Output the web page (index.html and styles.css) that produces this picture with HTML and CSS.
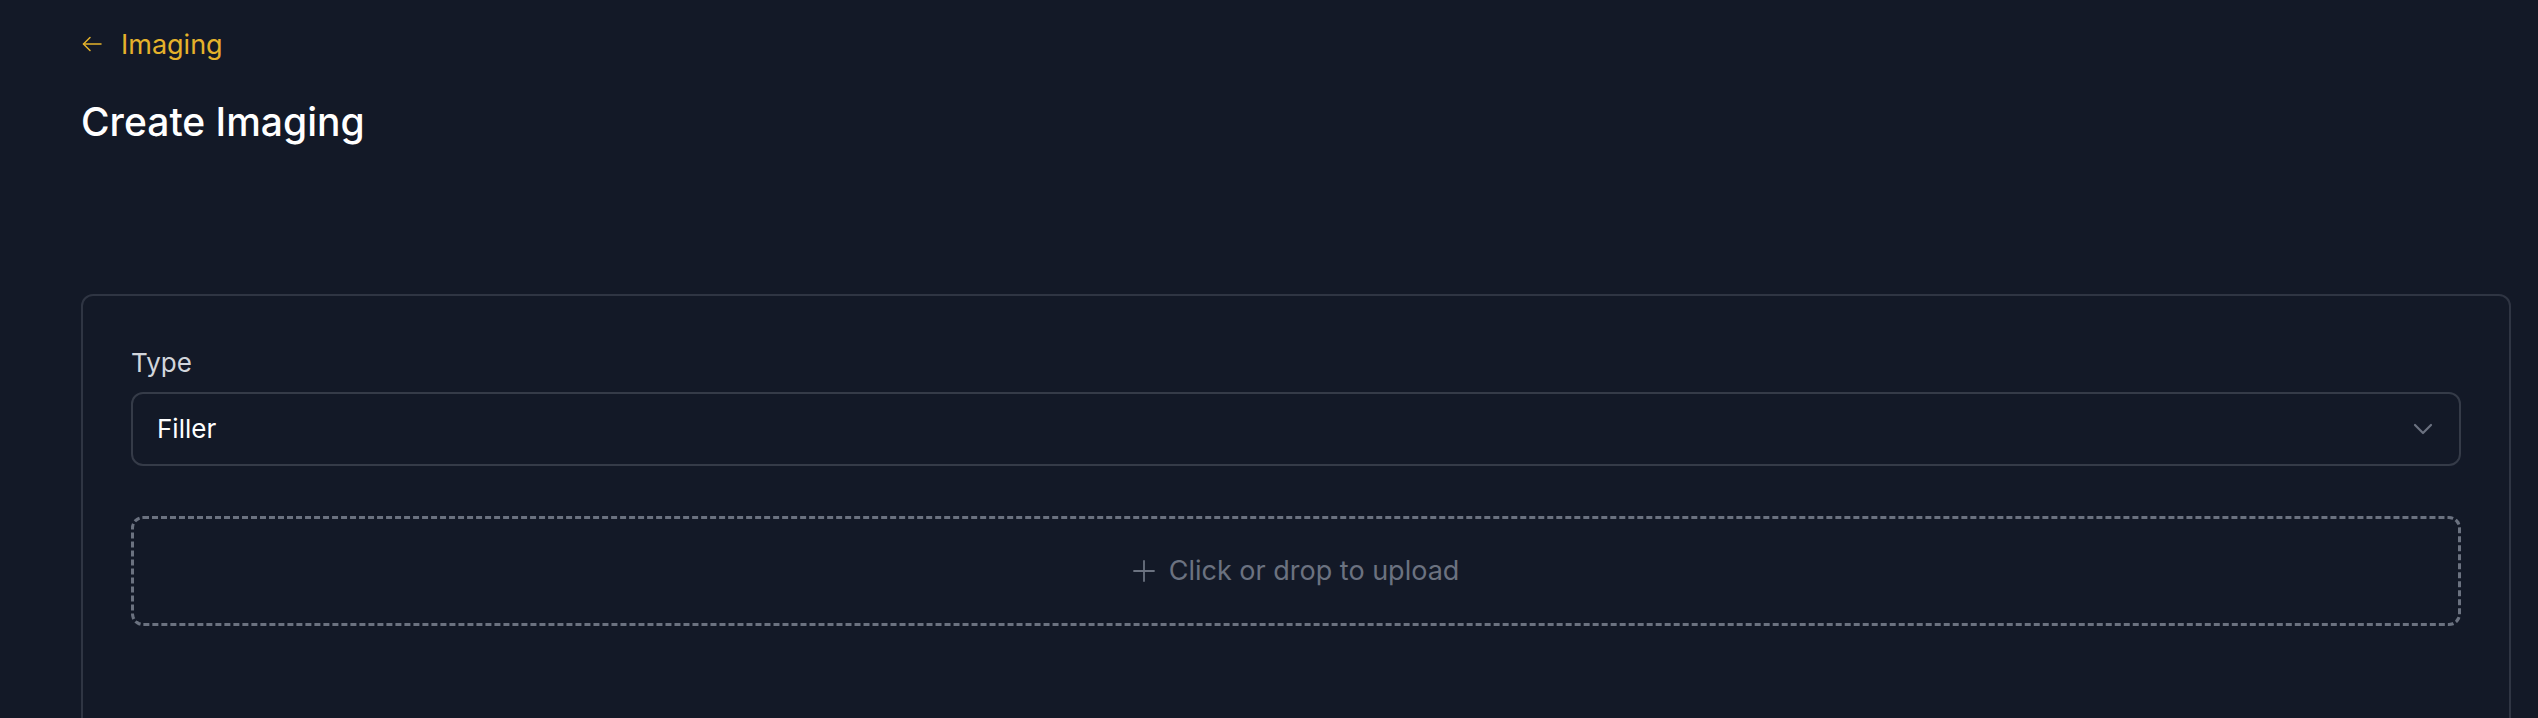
FILE: index.html
```html
<!DOCTYPE html>
<html lang="en">
<head>
  <meta charset="UTF-8">
  <meta name="viewport" content="width=device-width, initial-scale=1">
  <title>Create Imaging</title>
  <link rel="stylesheet" href="styles.css">
</head>
<body>

  <a class="back-link" href="#">
    <svg class="back-icon" viewBox="0 0 20 16" fill="none" stroke="currentColor" stroke-width="1.5" stroke-linecap="round" stroke-linejoin="round">
      <path d="M19 8H1.5"/>
      <path d="M8 1.5L1.5 8L8 14.5"/>
    </svg>
    <span>Imaging</span>
  </a>

  <h1 class="page-title">Create Imaging</h1>

  <div class="card">
    <label class="field-label" for="type">Type</label>
    <div class="select-wrap">
      <select id="type" class="select">
        <option>Filler</option>
        <option>Station ID</option>
        <option>Promo</option>
      </select>
      <svg class="chevron" viewBox="0 0 20 12" fill="none" stroke="currentColor" stroke-width="2.2" stroke-linecap="round" stroke-linejoin="round">
        <path d="M2 2l8 8 8-8"/>
      </svg>
    </div>

    <div class="dropzone">
      <svg class="plus-icon" viewBox="0 0 22 22" fill="none" stroke="currentColor" stroke-width="1.8" stroke-linecap="round">
        <path d="M11 1v20M1 11h20"/>
      </svg>
      <span>Click or drop to upload</span>
    </div>
  </div>

</body>
</html>
```

FILE: styles.css
```css
body {
  margin: 0;
  padding: 23px 27px 0 81px;
  background: #131927;
  color: #fff;
  font-family: Inter, "Noto Sans", sans-serif;
  font-size: 26px;
  line-height: 39px;
}
.back-link {
  display: inline-flex;
  align-items: center;
  gap: 19px;
  color: #e5b22b;
  font-size: 27px;
  text-decoration: none;
}
.back-icon {
  width: 20px;
  height: 16px;
  margin-left: 1px;
}
.page-title {
  margin: 34px 0 0;
  font-size: 39px;
  line-height: 48px;
  font-weight: 500;
}
.card {
  margin-top: 148px;
  padding: 47px 48px 140px;
  border: 2px solid #2f3543;
  border-radius: 12px;
}
.field-label {
  display: block;
  color: #d1d5db;
}
.select-wrap {
  position: relative;
  margin-top: 10px;
}
.select {
  display: block;
  width: 100%;
  height: 74px;
  padding: 0 60px 0 24px;
  font: inherit;
  color: #fff;
  background: #131927;
  border: 2px solid #353b48;
  border-radius: 12px;
  appearance: none;
  outline: none;
}
.chevron {
  position: absolute;
  right: 28px;
  top: 31px;
  width: 20px;
  height: 12px;
  color: #6b7280;
  pointer-events: none;
}
.dropzone {
  display: flex;
  align-items: center;
  justify-content: center;
  gap: 14px;
  height: 110px;
  margin-top: 50px;
  box-sizing: border-box;
  border: 3px dashed #6b7280;
  border-radius: 12px;
  color: #6b7280;
  font-size: 27px;
  cursor: pointer;
}
.plus-icon {
  width: 22px;
  height: 22px;
}
```
